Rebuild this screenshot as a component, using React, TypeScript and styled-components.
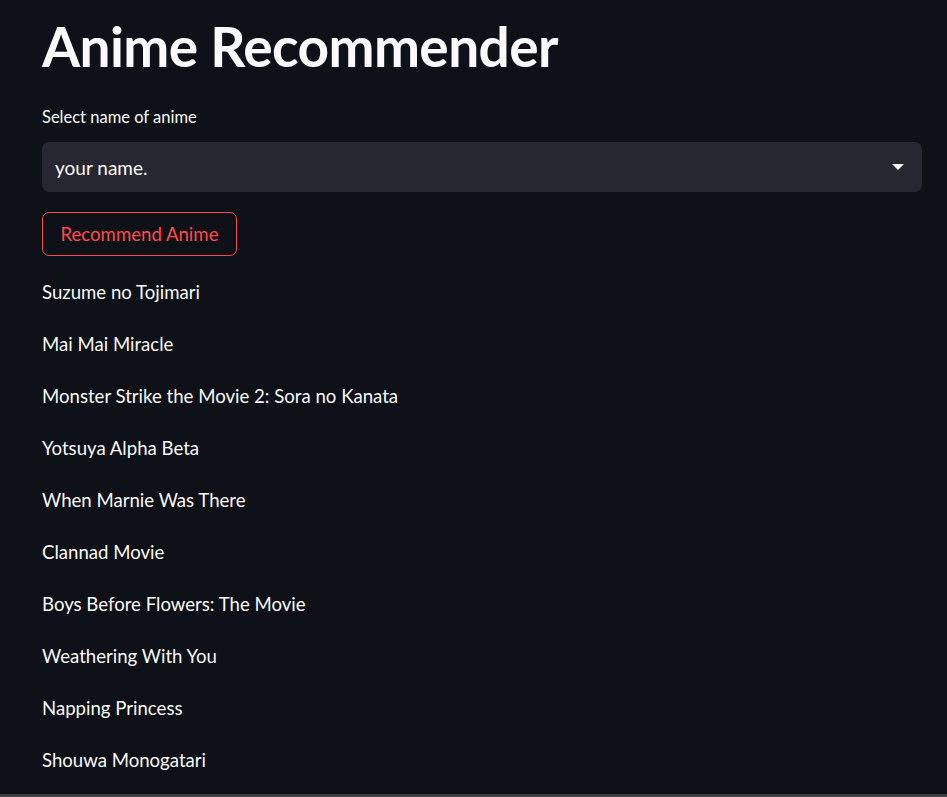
import styled, { createGlobalStyle } from 'styled-components'

const GlobalStyle = createGlobalStyle`
  html, body {
    margin: 0;
    padding: 0;
    background: #0e1117;
  }
  * {
    box-sizing: border-box;
  }
`

const Page = styled.main`
  min-height: 100vh;
  display: flex;
  flex-direction: column;
  padding: 14px 25px 0 42px;
  color: #fafafa;
  font-family: Lato, "Source Sans Pro", sans-serif;
  background: #0e1117;
  border-bottom: 3px solid #3d3e42;
`

const Title = styled.h1`
  margin: 0;
  font-size: 55px;
  font-weight: 700;
  line-height: 64px;
  letter-spacing: -0.6px;
`

const Label = styled.label`
  margin-top: 28px;
  font-size: 16.5px;
  line-height: 22px;
`

const Select = styled.div`
  margin-top: 14px;
  height: 50px;
  display: flex;
  align-items: center;
  justify-content: space-between;
  padding: 0 18px 0 13px;
  background: #262730;
  border-radius: 7px;
  font-size: 19px;
`

const Caret = styled.span`
  width: 0;
  height: 0;
  border-left: 6px solid transparent;
  border-right: 6px solid transparent;
  border-top: 6px solid #fafafa;
`

const Button = styled.button`
  margin-top: 20px;
  align-self: flex-start;
  height: 44px;
  padding: 0 17.5px;
  background: transparent;
  border: 1px solid #ff4b4b;
  border-radius: 7px;
  color: #ff4b4b;
  font-family: inherit;
  font-size: 18.6px;
  cursor: pointer;
`

const Results = styled.div`
  margin-top: 22px;
  display: flex;
  flex-direction: column;
  gap: 24px;
`

const Result = styled.p`
  margin: 0;
  font-size: 18.6px;
  line-height: 28px;
`

const recommendations = [
    'Suzume no Tojimari',
    'Mai Mai Miracle',
    'Monster Strike the Movie 2: Sora no Kanata',
    'Yotsuya Alpha Beta',
    'When Marnie Was There',
    'Clannad Movie',
    'Boys Before Flowers: The Movie',
    'Weathering With You',
    'Napping Princess',
    'Shouwa Monogatari'
]

export default () => {
    return (
        <>
            <GlobalStyle />
            <Page>
                <Title>Anime Recommender</Title>
                <Label>Select name of anime</Label>
                <Select>
                    <span>your name.</span>
                    <Caret />
                </Select>
                <Button>Recommend Anime</Button>
                <Results>
                    {
                        recommendations.map((name, index) =>
                            <Result key={index}>{ name }</Result>
                        )
                    }
                </Results>
            </Page>
        </>
    )
}
